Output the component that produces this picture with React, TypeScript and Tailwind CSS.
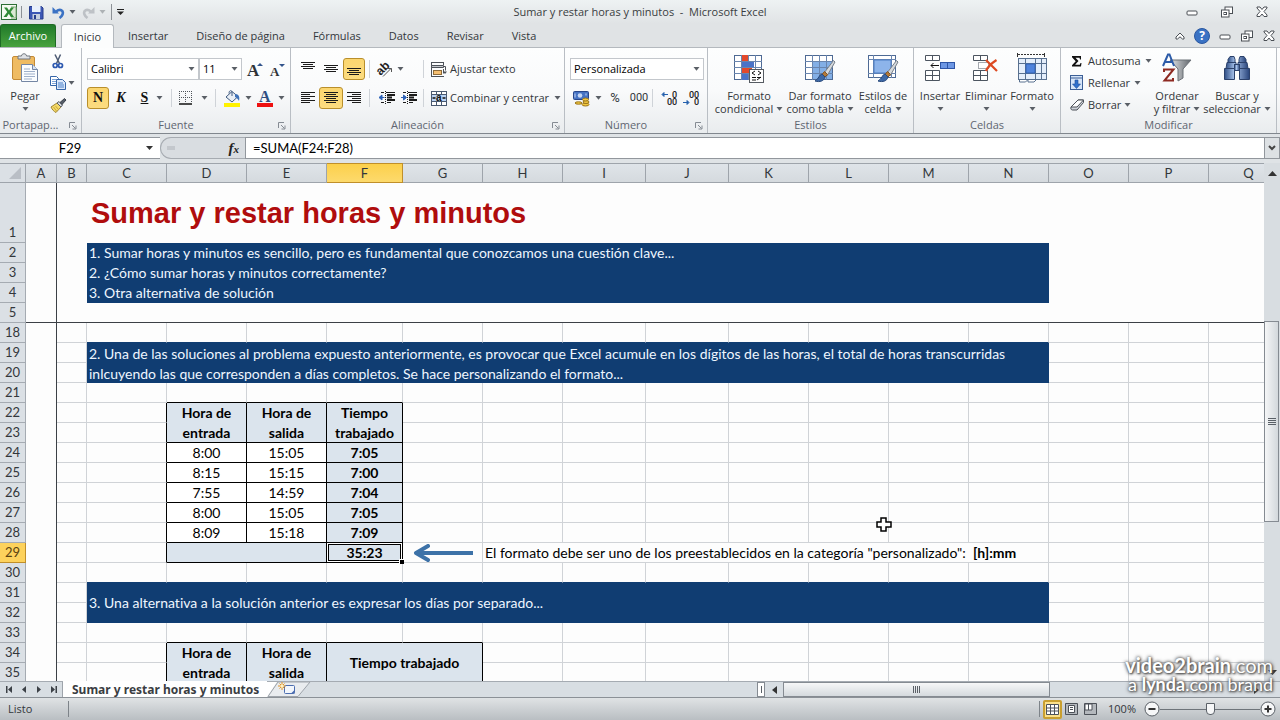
import type { ReactNode } from "react";

/* ---------- small shared pieces ---------- */

function Caret({ className = "" }: { className?: string }) {
  return (
    <svg width="7" height="4" viewBox="0 0 7 4" className={`shrink-0 ${className}`} aria-hidden="true">
      <path d="M0.5 0h6L3.5 3.8z" fill="#5a5f66" />
    </svg>
  );
}

function Divider() {
  return <span className="w-px h-[18px] bg-[#cfd3d8] shrink-0" />;
}

function IconButton({ label, active, width = "w-[22px]", children }: { label: string; active?: boolean; width?: string; children: ReactNode }) {
  return (
    <button
      type="button"
      aria-label={label}
      className={`${width} h-[22px] shrink-0 flex items-center justify-center gap-1 rounded-[3px] ${
        active ? "border border-[#b98f2b] bg-linear-to-b from-[#fbd66f] to-[#fcdc80]" : ""
      }`}
    >
      {children}
    </button>
  );
}

function Group({ title, launcher, width, children }: { title: string; launcher?: boolean; width: string; children: ReactNode }) {
  return (
    <section className={`${width} shrink-0 flex flex-col border-r border-[#b9bec4] relative`}>
      <div className="h-[69px] flex">{children}</div>
      <div className={`h-4 flex items-center justify-center text-[#5f6670] ${launcher ? "pr-5" : ""}`}>
        <h2>{title}</h2>
      </div>
      {launcher && (
        <button type="button" aria-label={`Opciones de ${title}`} className="absolute right-1 bottom-[3px]">
          <svg width="8" height="8" viewBox="0 0 8 8" fill="none" stroke="#858b93">
            <path d="M0.5 6V0.5H6M3 3l3.5 3.5M7 3.5V7H3.5" />
          </svg>
        </button>
      )}
    </section>
  );
}

function BigButton({ icon, lines, width }: { icon: ReactNode; lines: string[]; width: string }) {
  return (
    <button type="button" className={`${width} shrink-0 flex flex-col items-center pt-[5px] leading-[13px]`}>
      <span className="h-[30px] mb-[6px] flex items-center justify-center">{icon}</span>
      <span className="whitespace-nowrap">{lines[0]}</span>
      <span className="h-[13px] flex items-center gap-[3px] whitespace-nowrap">
        {lines[1]}
        <Caret />
      </span>
    </button>
  );
}

/* ---------- icons ---------- */

function ExcelLogo() {
  return (
    <svg width="17" height="17" viewBox="0 0 17 17">
      <rect x="0.5" y="0.5" width="15" height="15" fill="#f4faf1" stroke="#2c6e35" />
      <path d="M10 3h5v11h-5" fill="#dbe9d5" stroke="#7fa87a" />
      <path d="M3 3.5h3l2 3 2-3h3l-3.4 4.6L13 13H9.8L7.8 9.8 5.700 13H2.500l3.800-5z" fill="#2f8a36" />
    </svg>
  );
}

function SaveIcon() {
  return (
    <svg width="15" height="15" viewBox="0 0 15 15">
      <path d="M0.500 1.500h12l1.500 1.500v11H0.500z" fill="#3c57b5" stroke="#263c8a" />
      <rect x="3" y="1" width="8.500" height="6" fill="#e8f0fb" />
      <rect x="3.500" y="9" width="7.500" height="5" fill="#c8d0df" />
      <rect x="5" y="10" width="2" height="4" fill="#263c8a" />
    </svg>
  );
}

function UndoIcon({ redo }: { redo?: boolean }) {
  return (
    <svg width="13" height="13" viewBox="0 0 13 13" className={redo ? "-scale-x-100" : ""}>
      <path d="M4 5.500C8 2.500 12 4 10.500 8.500 10 10 9 11 7.500 12" fill="none" stroke={redo ? "#b4b8bd" : "#3b72c4"} strokeWidth="2.600" />
      <path d="M0.500 1v6.500h6.500z" fill={redo ? "#b4b8bd" : "#3b72c4"} />
    </svg>
  );
}

function MinimizeIcon() {
  return (
    <svg width="12" height="12" viewBox="0 0 12 12">
      <rect x="1" y="5" width="10" height="4" rx="1" fill="#fff" stroke="#4a4f55" />
    </svg>
  );
}

function RestoreIcon() {
  return (
    <svg width="12" height="12" viewBox="0 0 12 12" fill="#fff" stroke="#4a4f55">
      <rect x="4" y="1" width="7.500" height="6.500" />
      <rect x="0.500" y="4" width="7.500" height="7" />
      <rect x="3" y="6.500" width="2.500" height="2" />
    </svg>
  );
}

function CloseIcon() {
  return (
    <svg width="12" height="12" viewBox="0 0 12 12">
      <path d="M1 1h3l2 2.500L8 1h3v1L8 5.500 11 9v1.500H8L6 8l-2 2.500H1V9l3-3.500L1 2z" fill="#fff" stroke="#4a4f55" />
    </svg>
  );
}

function PasteIcon() {
  return (
    <svg width="28" height="30" viewBox="0 0 28 30">
      <rect x="1.500" y="3.500" width="22" height="23" rx="1.500" fill="#efbb62" stroke="#c48a35" />
      <path d="M7 6V3h3.500c0-3 5-3 5 0H19v3z" fill="#dfe2e6" stroke="#70767d" />
      <path d="M10.500 11.500h11l5 5v12h-16z" fill="#fbfdff" stroke="#7486a4" />
      <path d="M21.500 11.500v5h5" fill="#d6e2f2" stroke="#7486a4" />
      <path d="M13 16h6M13 18.500h11M13 21h11M13 23.500h11M13 26h8" stroke="#9fb0cb" />
    </svg>
  );
}

function CutIcon() {
  return (
    <svg width="12" height="15" viewBox="0 0 12 15" fill="none">
      <path d="M3 0.500l4.500 9M8.500 0.500L4.500 9.500" stroke="#4d5b73" strokeWidth="1.500" />
      <circle cx="3.200" cy="11.500" r="2" stroke="#2d59b0" strokeWidth="1.700" />
      <circle cx="8.500" cy="11.500" r="2" stroke="#2d59b0" strokeWidth="1.700" />
    </svg>
  );
}

function CopyIcon() {
  return (
    <svg width="16" height="14" viewBox="0 0 16 14" fill="#fff" stroke="#3565a8">
      <path d="M0.500 0.500h6l2 2v7h-8z" />
      <path d="M2 3.500h4M2 5.500h4M2 7.500h4" stroke="#7ea4d8" />
      <path d="M6.500 3.500h6l3 3v7h-9z" fill="#dbe8fa" />
      <path d="M8 7h5M8 9h6M8 11h6" stroke="#4b80c9" />
    </svg>
  );
}

function BrushIcon() {
  return (
    <svg width="17" height="15" viewBox="0 0 17 15">
      <path d="M1 9l6-4 4 4-5 5.500C4 13.500 2 11.500 1 9z" fill="#f3d968" stroke="#a18532" />
      <path d="M7 5l2-1.500L12.500 7 11 9z" fill="#d9dce0" stroke="#5a6068" />
      <path d="M10 4.500L14.500 0.500l1.500 1.500-4 4.500z" fill="#555d69" stroke="#3a4049" />
      <path d="M3.500 9l3 4M5.500 8l3 3.500" stroke="#c9a83c" />
    </svg>
  );
}

function GrowFont({ small }: { small?: boolean }) {
  return (
    <svg width="16" height="17" viewBox="0 0 16 17" className="overflow-visible">
      <text x="1" y="15" fontFamily="Liberation Serif, serif" fontWeight="700" fontSize={small ? 13 : 17} fill="#2f3338">
        A
      </text>
      <path d={small ? "M10 3h6l-3 3z" : "M11 5h6L14 2z"} fill="#32548c" />
    </svg>
  );
}

function BordersIcon() {
  return (
    <svg width="14" height="14" viewBox="0 0 14 14" fill="none" stroke="#4f545a">
      <path d="M0.500 0v12M6.500 0v12M12.500 0v12M0 0.500h13M0 6.500h13" strokeDasharray="1 1" />
      <path d="M0 13h13" stroke="#111" strokeWidth="1.500" />
    </svg>
  );
}

function FillIcon() {
  return (
    <svg width="17" height="17" viewBox="0 0 17 17">
      <path d="M2 7l6-5.500 6 5-6 5.500z" fill="#e9eff6" stroke="#405a80" />
      <path d="M8 6V1.500c-2-2-3 0-3 2" fill="none" stroke="#405a80" />
      <path d="M11 4c4 0 5 3 4 7-1-2-2-3-4-4z" fill="#3e71b8" />
      <rect y="13" width="16" height="4" fill="#fff200" />
    </svg>
  );
}

function FontColorIcon() {
  return (
    <svg width="17" height="17" viewBox="0 0 17 17" className="overflow-visible">
      <text x="2" y="12" fontFamily="Liberation Serif, serif" fontWeight="700" fontSize="16" fill="#2f4f82">
        A
      </text>
      <rect y="13" width="16" height="4" fill="#ee1111" />
    </svg>
  );
}

function LinesIcon({ rows, y }: { rows: [number, number][]; y: number }) {
  return (
    <svg width="14" height="14" viewBox="0 0 14 14" stroke="#1b1b1b">
      {rows.map(([a, b], i) => (
        <path key={i} d={`M${a} ${y + i * 2 + 0.5}H${b}`} />
      ))}
    </svg>
  );
}

const shortLines: [number, number][] = [[0, 14], [2, 12], [0, 14], [2, 12]];
const leftLines: [number, number][] = [[0, 14], [0, 9], [0, 14], [0, 9], [0, 14], [0, 9]];
const centerLines: [number, number][] = [[0, 14], [2, 12], [0, 14], [2, 12], [0, 14], [2, 12]];
const rightLines: [number, number][] = [[0, 14], [5, 14], [0, 14], [5, 14], [0, 14], [5, 14]];

function IndentIcon({ more }: { more?: boolean }) {
  return (
    <svg width="16" height="14" viewBox="0 0 16 14" stroke="#1b1b1b">
      <path d="M2 1.500h3M7 1.500h9M8 11.500h4M2 11.500h3" />
      <path d="M8 4h8M8 6.500h5M8 9h8" strokeWidth="2" />
      <path d="M6.500 0v14" strokeDasharray="1 1" />
      <path d={more ? "M0 6.500h3M2.500 4v5l3-2.500z" : "M2.500 6.500h3M3 4v5L0 6.500z"} fill="#2d62b8" stroke="#2d62b8" />
    </svg>
  );
}

function OrientationIcon() {
  return (
    <svg width="16" height="16" viewBox="0 0 16 16" className="shrink-0 overflow-visible">
      <text x="-1" y="12" transform="rotate(-45 5 8)" fontFamily="Liberation Sans, sans-serif" fontWeight="700" fontSize="12" fill="#222">
        ab
      </text>
      <path d="M6 15.500l8-8M10.500 7.500h4V11" stroke="#555" fill="none" />
    </svg>
  );
}

function WrapIcon() {
  return (
    <svg width="16" height="15" viewBox="0 0 16 15" fill="none" stroke="#4c5158">
      <path d="M0.500 0v15M12.500 0v3M0 0.500h13M0 14.500h13" />
      <path d="M0.500 3.500h12v2h-12z" fill="#c2c6cb" />
      <rect x="2.500" y="8.500" width="8" height="4" fill="#f6bf71" stroke="#8e6b38" />
      <path d="M12.500 4.500h2v4M12.500 11.500V7" />
      <path d="M12 9.500h4L14 12z" fill="#4c5158" stroke="none" />
    </svg>
  );
}

function MergeIcon() {
  return (
    <svg width="16" height="15" viewBox="0 0 16 15" stroke="#495970" fill="#fff">
      <rect x="0.500" y="0.500" width="15" height="14" />
      <path d="M5.500 0v3M10.500 0v3M5.500 11v3M10.500 11v3" />
      <rect x="0.500" y="3.500" width="15" height="7" fill="#b8d1f3" />
      <path d="M1.500 7h3M11.500 7h3" stroke="#111" strokeWidth="1.500" />
      <text x="5" y="10" fontSize="10" fontWeight="700" fontFamily="Liberation Sans, sans-serif" fill="#111" stroke="none">a</text>
    </svg>
  );
}

function CurrencyIcon() {
  return (
    <svg width="18" height="17" viewBox="0 0 18 17">
      <rect x="0.500" y="1.500" width="15" height="8" rx="1" fill="#4673c3" stroke="#27468a" />
      <circle cx="7" cy="5.500" r="2.300" fill="#c6d8f4" />
      <path d="M2 3.500v4M13 3.500v2" stroke="#c6d8f4" />
      <g fill="#f2c83f" stroke="#9a741c">
        <ellipse cx="12.500" cy="14.500" rx="3.500" ry="1.500" />
        <ellipse cx="13" cy="12" rx="3" ry="1.500" />
        <ellipse cx="12.500" cy="9.500" rx="3" ry="1.500" />
        <ellipse cx="5.500" cy="13" rx="3.500" ry="1.200" />
      </g>
    </svg>
  );
}

function DecimalIcon({ less }: { less?: boolean }) {
  return (
    <svg width="16" height="15" viewBox="0 0 16 15" className="overflow-visible">
      <g fontFamily="Roboto, sans-serif" fontWeight="500" fontSize="9" fill="#222">
        <text x={less ? 6 : 11} y="7">{less ? "00" : "0"}</text>
        <text x={less ? 11 : 6} y="14">{less ? "0" : "00"}</text>
      </g>
      <path d={less ? "M0 11.500h4M4 9.500l2 2-2 2z" : "M3 3.500h4M3 1.500L1 3.500l2 2z"} stroke="#2460ad" fill="#2460ad" />
    </svg>
  );
}

function GridBase({ fill }: { fill?: string }) {
  return (
    <>
      <rect x="0.500" y="2.500" width="27" height="24" fill="#fff" stroke="#4e6a94" />
      {fill && <rect x="7" y="8" width="20" height="18" fill={fill} />}
      <path d="M7.500 2v25M14.500 2v25M21.500 2v25M0 8.500h28M0 14.500h28M0 20.500h28" stroke="#6985ae" />
    </>
  );
}

function BrushOverlay() {
  return (
    <>
      <path d="M28.500 7.500L19 20l3 3 8-14z" fill="#d5d9dd" stroke="#777f88" />
      <path d="M19.500 18.500l-2.500 3 3 2.500 2.500-2.500z" fill="#b37a3a" stroke="#805222" />
      <path d="M17 21c-3 .5-3 5-7 7 5 1.500 9 0 10-4z" fill="#3d68a6" stroke="#294a7c" />
    </>
  );
}

function ConditionalIcon() {
  return (
    <svg width="31" height="30" viewBox="0 0 31 30">
      <GridBase />
      <rect x="8" y="2" width="6" height="6" fill="#e2492b" />
      <rect x="8" y="9" width="12" height="5" fill="#4a73c8" />
      <rect x="8" y="15" width="10" height="5" fill="#e2492b" />
      <rect x="8" y="21" width="6" height="6" fill="#4a73c8" />
      <rect x="15.500" y="16.500" width="14" height="13" fill="#fff" stroke="#555b62" />
      <path d="M21 18l-3 2 3 2M18 24.500h4M18 27h4M24 18l3 2-3 2M23 24.500h4M23 27l4-3" stroke="#111" fill="none" />
    </svg>
  );
}

function TableFormatIcon() {
  return (
    <svg width="31" height="30" viewBox="0 0 31 30">
      <GridBase fill="#83afe6" />
      <BrushOverlay />
    </svg>
  );
}

function CellStyleIcon() {
  return (
    <svg width="31" height="30" viewBox="0 0 31 30">
      <rect x="0.500" y="2.500" width="27" height="22" fill="#fff" stroke="#4e6a94" />
      <path d="M5.500 2v23M23.500 2v23M0 6.500h28M0 20.500h28" stroke="#6985ae" />
      <rect x="6" y="7" width="17" height="13" fill="#8db4ea" stroke="#4c7cc2" />
      <BrushOverlay />
    </svg>
  );
}

function InsertIcon() {
  return (
    <svg width="31" height="28" viewBox="0 0 31 28" fill="#fff" stroke="#4c5560">
      <path d="M0.500 1.500h14v5h-14zM7.500 1.500v5M0.500 16.500h14v10h-14zM7.500 16.500v10M0.500 21.500h14" />
      <rect x="15.500" y="8.500" width="14" height="6" fill="#6d97e4" stroke="#2e55a6" />
      <path d="M22.500 8.500v6" stroke="#2e55a6" />
      <path d="M6 11.500h8M8.500 9L6 11.500 8.500 14" stroke="#111" fill="none" />
    </svg>
  );
}

function DeleteIcon() {
  return (
    <svg width="26" height="28" viewBox="0 0 26 28" fill="#fff" stroke="#4c5560">
      <path d="M0.500 1.500h14v5h-14zM7.500 1.500v5M0.500 16.500h14v10h-14zM7.500 16.500v10M0.500 21.500h14" />
      <path d="M5.500 8.500h10v6h-10z" strokeDasharray="1 1" />
      <path d="M13 6l11 11M23.500 6C19 9 15 12 13 17" stroke="#dd4a22" strokeWidth="2.200" fill="none" />
    </svg>
  );
}

function FormatIcon() {
  return (
    <svg width="31" height="30" viewBox="0 0 31 30" fill="#fff" stroke="#58708f">
      <path d="M1 1.500h26" strokeDasharray="2 1" stroke="#333" />
      <path d="M0.500 0v4M27.500 0v4" stroke="#333" />
      <rect x="1.500" y="5.500" width="28" height="21" fill="#e4eefb" />
      <path d="M1 10.500h28M1 20.500h28M8.500 5v22M18.500 5v22M24.500 5v22" />
      <rect x="9" y="11" width="9" height="9" fill="#4f83dc" stroke="#3263b4" />
      <path d="M2.500 27v2h6l2-2M11 27v2h6l2-2" />
    </svg>
  );
}

function SumIcon() {
  return (
    <svg width="14" height="14" viewBox="0 0 14 14" className="shrink-0">
      <path d="M2 2h9v3.500h-1L9.500 3.800H5.500L8.500 7l-3.400 3.800H9.800L10.500 9h1L11 12.500H2v-1.200L5.700 7.200 2 3.300z" fill="#111" />
    </svg>
  );
}

function FillDownIcon() {
  return (
    <svg width="14" height="16" viewBox="0 0 14 16" className="shrink-0">
      <rect x="0.500" y="0.500" width="12" height="14" fill="#d6e5f8" stroke="#3c5f96" />
      <path d="M0.500 3h12" stroke="#3c5f96" />
      <path d="M5 5h3v4h2.500L6.500 13.500 2.500 9H5z" fill="#2f70cc" stroke="#1f4f9a" strokeWidth="0.600" />
    </svg>
  );
}

function EraserIcon() {
  return (
    <svg width="15" height="12" viewBox="0 0 15 12" className="shrink-0" stroke="#4a4f57">
      <path d="M1 8L8 1h5.500v2.500L7 11H2.500C1 11 0.500 9.500 1 8z" fill="#cfd3da" />
      <path d="M1 8L8 1h5.500L7 8z" fill="#fff" />
    </svg>
  );
}

function SortIcon() {
  return (
    <svg width="30" height="30" viewBox="0 0 30 30" className="overflow-visible">
      <defs>
        <linearGradient id="funnel">
          <stop offset="0" stopColor="#e3e5e7" />
          <stop offset="1" stopColor="#62676d" />
        </linearGradient>
      </defs>
      <path d="M8 7h21l-8 9v9l-5 3V16z" fill="url(#funnel)" stroke="#6b7077" />
      <path d="M1 13L6 1.500h1.500L12 13M3.500 9h7" stroke="#2c5ba8" strokeWidth="2" fill="none" />
      <path d="M2 19v-2.500h9.500L2.500 27.500H11V25" stroke="#8e2a22" strokeWidth="2" fill="none" />
    </svg>
  );
}

function BinocularsIcon() {
  return (
    <svg width="28" height="28" viewBox="0 0 28 28">
      <defs>
        <linearGradient id="lens">
          <stop offset="0" stopColor="#2f4f86" />
          <stop offset=".4" stopColor="#a9c4ec" />
          <stop offset="1" stopColor="#27437a" />
        </linearGradient>
      </defs>
      <g fill="url(#lens)" stroke="#2b416b">
        <path d="M7 2.500h4l1 3v3H5v-3zM17 2.500h4l2 3v3h-7v-3z" />
        <path d="M4 8.500h9v6H3zM15 8.500h9l1 6H15z" />
        <rect x="11.500" y="10.500" width="5" height="6" />
        <path d="M1.500 14.500h10v11h-10zM16.500 14.500h10v11h-10z" />
      </g>
    </svg>
  );
}

/* ---------- window chrome ---------- */

const menuTabs = ["Insertar", "Diseño de página", "Fórmulas", "Datos", "Revisar", "Vista"];

function TitleBar() {
  return (
    <header className="h-6 shrink-0 grid grid-cols-[1fr_auto_1fr] items-center bg-linear-to-b from-[#eef2f3] to-[#e0e3e5]">
      <div className="flex items-center pl-px">
        <ExcelLogo />
        <span className="w-px h-3 bg-[#8c9196] ml-[3px] mr-[7px]" />
        <button type="button" aria-label="Guardar"><SaveIcon /></button>
        <button type="button" aria-label="Deshacer" className="ml-2 flex items-center gap-1"><UndoIcon /><Caret /></button>
        <button type="button" aria-label="Rehacer" className="ml-[6px] flex items-center gap-1 opacity-80"><UndoIcon redo /><Caret className="opacity-50" /></button>
        <span className="w-px h-4 bg-[#8c9196] mx-[5px]" />
        <button type="button" aria-label="Personalizar barra">
          <svg width="7" height="6" viewBox="0 0 7 6"><path d="M0 0.500h7" stroke="#222" /><path d="M0 2.500h7L3.500 6z" fill="#222" /></svg>
        </button>
      </div>
      <h1 className="text-[#3a3d41] whitespace-pre">{"Sumar y restar horas y minutos  -  Microsoft Excel"}</h1>
      <div className="flex items-center justify-end gap-[23px] pr-3">
        <button type="button" aria-label="Minimizar"><MinimizeIcon /></button>
        <button type="button" aria-label="Restaurar"><RestoreIcon /></button>
        <button type="button" aria-label="Cerrar"><CloseIcon /></button>
      </div>
    </header>
  );
}

function MenuBar() {
  return (
    <nav className="h-6 shrink-0 flex items-end bg-[#e0e3e5] border-b border-[#b4b9be] text-[#33373b]">
      <button type="button" className="w-14 h-[23px] rounded-t-[3px] border border-b-0 border-[#1e6a24] bg-linear-to-b from-[#1f7a2a] to-[#48a23e] text-white">Archivo</button>
      <button type="button" className="w-[53px] h-6 ml-[5px] -mb-px rounded-t-[3px] border border-b-0 border-[#b4b9be] bg-[#fcfdfd]">Inicio</button>
      {menuTabs.map((t) => (
        <button key={t} type="button" className="h-[23px] px-[14px]">{t}</button>
      ))}
      <div className="ml-auto h-[23px] flex items-center gap-[10px] pr-[5px]">
        <button type="button" aria-label="Minimizar la cinta">
          <svg width="10" height="8" viewBox="0 0 10 8"><path d="M1 5l4-4 4 4v2H7.500L5 4.800 2.500 7H1z" fill="#fff" stroke="#4a4f55" /></svg>
        </button>
        <button type="button" aria-label="Ayuda" className="size-4 -mx-px rounded-full bg-[#3a72c4] border border-[#2a57a0] text-white font-bold leading-[14px] text-[12px]">?</button>
        <button type="button" aria-label="Minimizar libro"><MinimizeIcon /></button>
        <button type="button" aria-label="Restaurar libro"><RestoreIcon /></button>
        <button type="button" aria-label="Cerrar libro"><CloseIcon /></button>
      </div>
    </nav>
  );
}

function Combo({ label, value, width }: { label: string; value: string; width: string }) {
  return (
    <label className={`${width} h-[22px] shrink-0 relative block`}>
      <select aria-label={label} defaultValue={value} className="w-full h-full appearance-none border border-[#c3c7cc] bg-white pl-[3px] text-black outline-none">
        <option>{value}</option>
      </select>
      <Caret className="absolute right-[4px] top-[9px]" />
    </label>
  );
}

function Ribbon() {
  return (
    <div className="h-[86px] shrink-0 flex overflow-hidden bg-linear-to-b from-[#fdfefe] via-[#f9fafb] to-[#e9ecee] border-b border-[#81878e] text-[#33373b]">
      <Group title="Portapap..." launcher width="w-[82px]">
        <BigButton width="w-[50px]" icon={<PasteIcon />} lines={["Pegar", ""]} />
        <div className="flex flex-col gap-2 pt-[6px]">
          <button type="button" aria-label="Cortar" className="h-[14px] pl-[2px] flex items-center"><CutIcon /></button>
          <button type="button" aria-label="Copiar" className="h-[14px] flex items-center gap-[2px]"><CopyIcon /><Caret /></button>
          <button type="button" aria-label="Copiar formato" className="h-[14px] flex items-center"><BrushIcon /></button>
        </div>
      </Group>

      <Group title="Fuente" launcher width="w-[209px]">
        <div className="flex flex-col gap-[7px] pt-[10px] pl-[5px]">
          <div className="flex items-center">
            <Combo label="Fuente" value="Calibri" width="w-[112px]" />
            <Combo label="Tamaño" value="11" width="w-[43px]" />
            <IconButton label="Aumentar fuente" width="w-6"><GrowFont /></IconButton>
            <IconButton label="Disminuir fuente"><GrowFont small /></IconButton>
          </div>
          <div className="flex items-center font-['Liberation_Serif',serif] text-[14px] text-[#111]">
            <IconButton label="Negrita" active><b>N</b></IconButton>
            <IconButton label="Cursiva" width="w-6"><b className="italic">K</b></IconButton>
            <IconButton label="Subrayado" width="w-[38px]"><b className="underline mr-1">S</b><Caret /></IconButton>
            <Divider />
            <IconButton label="Bordes" width="w-[43px]"><BordersIcon /><Caret className="ml-1" /></IconButton>
            <Divider />
            <IconButton label="Relleno" width="w-[43px]"><FillIcon /><Caret /></IconButton>
            <IconButton label="Color de fuente" width="w-6"><FontColorIcon /><Caret /></IconButton>
          </div>
        </div>
      </Group>

      <Group title="Alineación" launcher width="w-[274px]">
        <div className="flex flex-col gap-[7px] pt-[10px] pl-[6px]">
          <div className="flex items-center">
            <IconButton label="Alinear arriba"><LinesIcon rows={shortLines} y={0} /></IconButton>
            <IconButton label="Alinear al medio" width="w-6"><LinesIcon rows={shortLines} y={3} /></IconButton>
            <IconButton label="Alinear abajo" active><LinesIcon rows={shortLines} y={6} /></IconButton>
            <span className="w-1" />
            <Divider />
            <IconButton label="Orientación" width="w-[40px]"><OrientationIcon /><Caret /></IconButton>
            <span className="w-[13px]" />
            <Divider />
          </div>
          <div className="flex items-center">
            <IconButton label="Alinear a la izquierda"><LinesIcon rows={leftLines} y={1} /></IconButton>
            <IconButton label="Centrar" active width="w-6"><LinesIcon rows={centerLines} y={1} /></IconButton>
            <IconButton label="Alinear a la derecha"><LinesIcon rows={rightLines} y={1} /></IconButton>
            <span className="w-1" />
            <Divider />
            <span className="w-[6px]" />
            <IconButton label="Disminuir sangría"><IndentIcon /></IconButton>
            <IconButton label="Aumentar sangría"><IndentIcon more /></IconButton>
            <span className="w-[3px]" />
            <Divider />
          </div>
        </div>
        <div className="flex flex-col gap-[7px] pt-[10px] pl-[7px]">
          <button type="button" className="h-[22px] flex items-center gap-[3px] whitespace-nowrap"><WrapIcon />Ajustar texto</button>
          <button type="button" className="h-[22px] flex items-center gap-[3px] whitespace-nowrap"><MergeIcon />Combinar y centrar<Caret className="ml-[2px]" /></button>
        </div>
      </Group>

      <Group title="Número" launcher width="w-[143px]">
        <div className="flex flex-col gap-[7px] pt-[10px] pl-[5px]">
          <Combo label="Formato de número" value="Personalizada" width="w-[134px]" />
          <div className="flex items-center text-[12px]">
            <IconButton label="Contabilidad" width="w-[34px]"><CurrencyIcon /><Caret /></IconButton>
            <IconButton label="Porcentaje"><span className="font-['Roboto',sans-serif] text-[13px]">%</span></IconButton>
            <IconButton label="Millares" width="w-[26px]"><span className="font-['Roboto',sans-serif] text-[11px]">000</span></IconButton>
            <Divider />
            <span className="w-[5px]" />
            <IconButton label="Aumentar decimales"><DecimalIcon /></IconButton>
            <IconButton label="Disminuir decimales"><DecimalIcon less /></IconButton>
          </div>
        </div>
      </Group>

      <Group title="Estilos" width="w-[206px]">
        <span className="w-1" />
        <BigButton width="w-[74px]" icon={<ConditionalIcon />} lines={["Formato", "condicional"]} />
        <BigButton width="w-[68px]" icon={<TableFormatIcon />} lines={["Dar formato", "como tabla"]} />
        <BigButton width="w-[58px]" icon={<CellStyleIcon />} lines={["Estilos de", "celda"]} />
      </Group>

      <Group title="Celdas" width="w-[147px]">
        <span className="w-[3px]" />
        <BigButton width="w-[46px]" icon={<InsertIcon />} lines={["Insertar", ""]} />
        <BigButton width="w-[46px]" icon={<DeleteIcon />} lines={["Eliminar", ""]} />
        <BigButton width="w-[46px]" icon={<FormatIcon />} lines={["Formato", ""]} />
      </Group>

      <Group title="Modificar" width="w-[216px]">
        <div className="w-[92px] shrink-0 flex flex-col gap-[6px] pt-[5px] pl-[9px]">
          <button type="button" className="h-4 flex items-center gap-1 whitespace-nowrap"><SumIcon />Autosuma<Caret /></button>
          <button type="button" className="h-4 flex items-center gap-1 whitespace-nowrap"><FillDownIcon />Rellenar<Caret /></button>
          <button type="button" className="h-4 flex items-center gap-[3px] whitespace-nowrap"><EraserIcon />Borrar<Caret /></button>
        </div>
        <BigButton width="w-12" icon={<SortIcon />} lines={["Ordenar", "y filtrar"]} />
        <BigButton width="w-[72px]" icon={<BinocularsIcon />} lines={["Buscar y", "seleccionar"]} />
      </Group>
    </div>
  );
}

function FormulaBar() {
  return (
    <div className="h-[29px] shrink-0 flex items-start pt-[3px] bg-[#dfe3e6] text-[13px] text-black font-['Lato',sans-serif]">
      <div className="w-40 h-[22px] shrink-0 flex items-center bg-white border-y border-[#92979d]">
        <input aria-label="Cuadro de nombres" defaultValue="F29" className="w-[140px] text-center outline-none bg-transparent" />
        <svg width="7" height="4" viewBox="0 0 7 4" className="ml-[6px]"><path d="M0 0h7L3.500 4z" fill="#333" /></svg>
      </div>
      <div className="w-[85px] h-[22px] shrink-0 flex items-center justify-between rounded-l-full border border-r-0 border-[#a6abb1] bg-[#d9dde1] px-[6px]">
        <span className="w-2 h-1 bg-[#c3c7cc]" />
        <button type="button" aria-label="Insertar función" className="font-['Liberation_Serif',serif] italic font-bold text-[15px] leading-none text-[#222]">
          f<span className="text-[11px]">x</span>
        </button>
      </div>
      <input aria-label="Barra de fórmulas" defaultValue="=SUMA(F24:F28)" className="flex-1 min-w-0 h-[22px] border border-r-0 border-[#92979d] bg-white pl-[7px] outline-none" />
      <button type="button" aria-label="Expandir" className="w-4 h-[22px] flex items-center justify-center border border-[#92979d] bg-[#dde1e4]">
        <svg width="8" height="6" viewBox="0 0 8 6"><path d="M1 1l3 3 3-3" fill="none" stroke="#444" strokeWidth="2" /></svg>
      </button>
    </div>
  );
}

/* ---------- worksheet ---------- */

const columns: [string, number][] = [
  ["A", 31], ["B", 30], ["C", 80], ["D", 80], ["E", 80], ["F", 76], ["G", 80], ["H", 80], ["I", 83],
  ["J", 83], ["K", 80], ["L", 80], ["M", 80], ["N", 80], ["O", 80], ["P", 80], ["Q", 80],
];
const letters = columns.map(([l]) => l);
const rowNumbers = [1, 2, 3, 4, 5, 18, 19, 20, 21, 22, 23, 24, 25, 26, 27, 28, 29, 30, 31, 32, 33, 34, 35, 36];
const tableWidth = 26 + columns.reduce((sum, [, w]) => sum + w, 0);

type Cell = { content: ReactNode; cols?: number; rows?: number; cls: string };

const banner = "bg-[#103d72] text-[#eef6ff] pl-[2px] text-left whitespace-nowrap";
const head = "bg-[#dbe4ed] border-r border-b border-black text-center font-bold";
const plain = "bg-white border-r border-b border-black text-center";
const total = "bg-[#dbe4ed] border-r border-b border-black text-center font-bold";

const twoLines = (a: string, b: string) => (
  <div className="h-[39px] leading-5">
    {a}
    <br />
    {b}
  </div>
);

const cells: Record<string, Cell> = {
  C1: {
    content: "Sumar y restar horas y minutos",
    cols: 12,
    cls: "pl-1 text-left align-middle whitespace-nowrap font-['Liberation_Sans',sans-serif] font-bold text-[29px] text-[#b00d0d]",
  },
  C2: { content: "1. Sumar horas y minutos es sencillo, pero es fundamental que conozcamos una cuestión clave...", cols: 12, cls: `${banner} pb-px` },
  C3: { content: "2. ¿Cómo sumar horas y minutos correctamente?", cols: 12, cls: `${banner} pb-px` },
  C4: { content: "3. Otra alternativa de solución", cols: 12, cls: `${banner} pb-px` },
  C19: {
    content: twoLines(
      "2. Una de las soluciones al problema expuesto anteriormente, es provocar que Excel acumule en los dígitos de las horas, el total de horas transcurridas",
      "inlcuyendo las que corresponden a días completos. Se hace personalizando el formato..."
    ),
    cols: 12,
    rows: 2,
    cls: banner,
  },
  D22: { content: twoLines("Hora de", "entrada"), rows: 2, cls: head },
  E22: { content: twoLines("Hora de", "salida"), rows: 2, cls: head },
  F22: { content: twoLines("Tiempo", "trabajado"), rows: 2, cls: head },
  D29: { content: "", cols: 2, cls: head },
  F29: {
    content: (
      <>
        35:23
        <span className="absolute inset-px border border-black shadow-[0_0_0_1px_#fff,0_0_0_2px_#000]" />
        <span className="absolute -right-[2px] -bottom-[2px] size-[5px] bg-black border-t border-l border-white" />
      </>
    ),
    cls: `${total} relative`,
  },
  G29: {
    content: (
      <svg width="60" height="18" viewBox="0 0 60 18" className="ml-[10px] block" fill="none" stroke="#3d72a8" strokeWidth="4" aria-hidden="true">
        <path d="M60 9H4M15 2L3 9l12 7" strokeLinejoin="round" strokeLinecap="round" />
      </svg>
    ),
    cls: "border-r border-b border-[#d0d3d7]",
  },
  H29: {
    content: (
      <>
        El formato debe ser uno de los preestablecidos en la categoría "personalizado":&nbsp; <b>[h]:mm</b>
      </>
    ),
    cols: 7,
    cls: "border-r border-b border-[#d0d3d7] pl-[2px] text-left whitespace-nowrap",
  },
  C31: { content: "3. Una alternativa a la solución anterior es expresar los días por separado...", cols: 12, rows: 2, cls: `${banner} pb-px` },
  D34: { content: twoLines("Hora de", "entrada"), rows: 2, cls: head },
  E34: { content: twoLines("Hora de", "salida"), rows: 2, cls: head },
  F34: { content: "Tiempo trabajado", cols: 2, rows: 2, cls: head },
};

const times = [
  ["8:00", "15:05", "7:05"],
  ["8:15", "15:15", "7:00"],
  ["7:55", "14:59", "7:04"],
  ["8:00", "15:05", "7:05"],
  ["8:09", "15:18", "7:09"],
];
times.forEach(([start, end, worked], i) => {
  cells[`D${24 + i}`] = { content: start, cls: plain };
  cells[`E${24 + i}`] = { content: end, cls: plain };
  cells[`F${24 + i}`] = { content: worked, cls: total };
});

// positions hidden under a merged cell
const covered = new Set<string>();
Object.entries(cells).forEach(([ref, { cols = 1, rows = 1 }]) => {
  const c = letters.indexOf(ref[0]);
  const r = Number(ref.slice(1));
  for (let y = 0; y < rows; y++) {
    for (let x = 0; x < cols; x++) {
      if (x || y) covered.add(`${letters[c + x]}${r + y}`);
    }
  }
});

function blankClass(col: string, row: number) {
  const bottomEdge = row === 5 ? "border-b border-b-[#3c4046]" : "";
  if (col === "A") return `border-r border-r-[#3c4046] ${bottomEdge}`;
  if (row <= 5) return bottomEdge;
  const right = col === "C" && ((row >= 22 && row <= 29) || row >= 34) ? "border-r-black" : "border-r-[#d0d3d7]";
  let bottom = "border-b-[#d0d3d7]";
  if ((row === 21 && "DEF".includes(col)) || (row === 33 && "DEFG".includes(col))) bottom = "border-b-black";
  if ((row === 18 || row === 30) && col >= "C" && col <= "N") bottom = "border-b-[#103d72]";
  return `border-r border-b ${right} ${bottom}`;
}

function Sheet() {
  return (
    <div className="flex-1 min-w-0 overflow-hidden bg-[#fdfdfd]">
      <table
        className="table-fixed border-separate border-spacing-0 text-[14px] leading-[19px] text-black font-['Lato',sans-serif] [font-variant-ligatures:none]"
        style={{ width: tableWidth }}
      >
        <colgroup>
          <col style={{ width: 26 }} />
          {columns.map(([l, w]) => (
            <col key={l} style={{ width: w }} />
          ))}
        </colgroup>
        <thead>
          <tr className="h-5 text-[13px] text-[#33373b]">
            <th className="p-0 border-r border-y border-[#9ea4ab] bg-[#dbe0e5]">
              <svg width="12" height="12" viewBox="0 0 12 12" className="ml-auto mr-1"><path d="M12 0v12H0z" fill="#b9bec5" /></svg>
            </th>
            {letters.map((l) => (
              <th
                key={l}
                scope="col"
                className={`p-0 font-normal leading-[18px] border-r border-y ${
                  l === "F" ? "bg-linear-to-b from-[#fcd04a] to-[#fdda6c] border-[#c08f2a]" : "bg-linear-to-b from-[#dfe4e9] to-[#d5dade] border-[#9ea4ab]"
                }`}
              >
                {l}
              </th>
            ))}
          </tr>
        </thead>
        <tbody>
          {rowNumbers.map((n) => (
            <tr key={n} className={n === 1 ? "h-[60px]" : "h-5"}>
              <th
                scope="row"
                className={`p-0 font-normal text-[13px] align-bottom text-center border-r border-b ${
                  n === 29 ? "bg-[#fdd25c] border-[#c08f2a] text-[#5a4310]" : "bg-[#dbe0e5] border-[#a5abb2] text-[#33373b]"
                }`}
              >
                {n}
              </th>
              {letters.map((l) => {
                const ref = `${l}${n}`;
                if (covered.has(ref)) return null;
                const cell = cells[ref];
                return (
                  <td key={ref} colSpan={cell?.cols} rowSpan={cell?.rows} className={`p-0 ${cell ? cell.cls : blankClass(l, n)}`}>
                    {cell?.content}
                  </td>
                );
              })}
            </tr>
          ))}
        </tbody>
      </table>
    </div>
  );
}

function VerticalScroll() {
  return (
    <div className="w-4 shrink-0 flex flex-col items-center bg-[#d8dde1]">
      <button type="button" aria-label="Subir" className="h-5 w-full flex items-center justify-center">
        <svg width="9" height="5" viewBox="0 0 9 5"><path d="M4.500 0L9 5H0z" fill="#333" /></svg>
      </button>
      <div className="flex-1 w-full flex flex-col">
        <div className="flex-[139]" />
        <div className="flex-[199] w-[15px] border border-[#858b92] bg-linear-to-r from-[#f5f6f7] to-[#d3d8dc] flex flex-col items-center justify-center gap-px">
          <i className="w-2 h-px bg-[#5a6067]" />
          <i className="w-2 h-px bg-[#5a6067]" />
          <i className="w-2 h-px bg-[#5a6067]" />
          <i className="w-2 h-px bg-[#5a6067]" />
        </div>
        <div className="flex-[143]" />
      </div>
      <button type="button" aria-label="Bajar" className="h-[17px] w-full flex items-center justify-center">
        <svg width="9" height="5" viewBox="0 0 9 5"><path d="M4.500 5L9 0H0z" fill="#333" /></svg>
      </button>
    </div>
  );
}

const navPaths: [string, string][] = [
  ["Primera hoja", "M1 0h1.500v7H1zM7 0v7L3 3.500z"],
  ["Hoja anterior", "M6 0v7L2 3.500z"],
  ["Hoja siguiente", "M2 0v7l4-3.500z"],
  ["Última hoja", "M1 0v7l4-3.500zM5.500 0H7v7H5.500z"],
];

function SheetTabs() {
  return (
    <div className="h-4 shrink-0 flex items-stretch bg-[#d8dee3] border-t border-[#a5abb2]">
      <div className="w-[63px] shrink-0 flex items-center gap-[7px] pl-[5px] border-r border-[#9ea4ab]">
        {navPaths.map(([label, d]) => (
          <button key={label} type="button" aria-label={label}>
            <svg width="8" height="7" viewBox="0 0 8 7"><path d={d} fill="#3c4147" /></svg>
          </button>
        ))}
      </div>
      <button type="button" className="shrink-0 pl-[9px] pr-2 -mt-px bg-white text-[12px] leading-[15px] font-bold font-['Noto_Sans',sans-serif] text-[#3a3d42] whitespace-nowrap">
        Sumar y restar horas y minutos
      </button>
      <button type="button" aria-label="Insertar hoja" className="shrink-0">
        <svg width="46" height="15" viewBox="0 0 46 15">
          <path d="M0 0h10L0 15z" fill="#fff" />
          <path d="M11 0L1 14.500h30L43 0z" fill="#e9ecef" stroke="#9ea4ab" />
          <rect x="17.500" y="3.500" width="10" height="8" rx="1" fill="#f2f6fc" stroke="#4b6db0" />
          <path d="M24 11.500h3.500V8z" fill="#4b6db0" />
          <path d="M15 0v8M11 4h8M12.500 1.500l5 5M17.500 1.500l-5 5" stroke="#e29422" />
          <circle cx="15" cy="4" r="1.500" fill="#fff3c4" />
        </svg>
      </button>
      <div className="flex-1" />
      <span className="w-2 shrink-0 border border-[#858b92] bg-white flex justify-center py-[3px]"><i className="w-px bg-[#5a6067]" /></span>
      <div className="w-[515px] shrink-0 flex">
        <button type="button" aria-label="Izquierda" className="w-[18px] flex items-center justify-center">
          <svg width="5" height="8" viewBox="0 0 5 8"><path d="M5 0v8L0 4z" fill="#333" /></svg>
        </button>
        <div className="w-[267px] border border-[#858b92] bg-linear-to-b from-[#f6f7f8] to-[#d5dade] flex items-center justify-center gap-px">
          <i className="w-px h-[7px] bg-[#5a6067]" />
          <i className="w-px h-[7px] bg-[#5a6067]" />
          <i className="w-px h-[7px] bg-[#5a6067]" />
          <i className="w-px h-[7px] bg-[#5a6067]" />
        </div>
        <div className="flex-1" />
        <button type="button" aria-label="Derecha" className="w-4 flex items-center justify-center mr-4">
          <svg width="5" height="8" viewBox="0 0 5 8"><path d="M0 0v8l5-4z" fill="#333" /></svg>
        </button>
      </div>
    </div>
  );
}

function StatusBar() {
  return (
    <footer className="h-[23px] shrink-0 flex items-center bg-linear-to-b from-[#e0e3e5] to-[#b9bec2] border-t border-[#8b9197] text-[#33373b]">
      <span className="w-[68px] pl-2">Listo</span>
      <span className="w-px h-4 bg-[#7d8389]" />
      <span className="flex-1" />
      <span className="w-px h-4 bg-[#7d8389] mr-[3px]" />
      <button type="button" aria-label="Normal" className="w-[19px] h-[19px] flex items-center justify-center border-2 border-[#c99f2f] rounded-[2px] bg-[#fbe08a]">
        <svg width="13" height="11" viewBox="0 0 13 11" fill="#fff" stroke="#4c5158"><path d="M0.500 0.500h12v10h-12zM4.500 0v11M8.500 0v11M0 4h13M0 7h13" /></svg>
      </button>
      <button type="button" aria-label="Diseño de página" className="w-[19px] flex justify-center">
        <svg width="13" height="12" viewBox="0 0 13 12" fill="#b4b8bd" stroke="#4c5158"><path d="M0.500 0.500h12v11h-12z" /><path d="M3.500 2.500h6v7h-6z" fill="#fff" /><path d="M5 4.500h3M5 6.500h3" /></svg>
      </button>
      <button type="button" aria-label="Salto de página" className="w-[19px] flex justify-center">
        <svg width="13" height="12" viewBox="0 0 13 12" fill="#b4b8bd" stroke="#4c5158"><path d="M0.500 0.500h12v11h-12z" /><path d="M1 1h7v6H1zM4.500 1v6" fill="#fff" /></svg>
      </button>
      <span className="w-10 text-right pr-1">100%</span>
      <button type="button" aria-label="Alejar" className="ml-1">
        <svg width="16" height="16" viewBox="0 0 16 16"><circle cx="8" cy="8" r="7" fill="#f6f7f8" stroke="#5a6067" /><path d="M4.500 8h7" stroke="#333" strokeWidth="2" /></svg>
      </button>
      <input
        type="range"
        aria-label="Zoom"
        min={0}
        max={200}
        defaultValue={100}
        className="w-[100px] h-[14px] appearance-none bg-transparent bg-linear-to-b from-[#6e747a] to-[#6e747a] bg-[length:100%_1px] bg-center bg-no-repeat [&::-webkit-slider-thumb]:appearance-none [&::-webkit-slider-thumb]:w-[9px] [&::-webkit-slider-thumb]:h-3 [&::-webkit-slider-thumb]:bg-[#f6f7f8] [&::-webkit-slider-thumb]:border [&::-webkit-slider-thumb]:border-[#5a6067] [&::-webkit-slider-thumb]:rounded-b-[4px]"
      />
      <button type="button" aria-label="Acercar" className="mr-1">
        <svg width="16" height="16" viewBox="0 0 16 16"><circle cx="8" cy="8" r="7" fill="#f6f7f8" stroke="#5a6067" /><path d="M4.500 8h7M8 4.500v7" stroke="#333" strokeWidth="2" /></svg>
      </button>
    </footer>
  );
}

export default function App() {
  return (
    <div className="h-screen flex flex-col relative overflow-hidden bg-[#dfe3e6] text-[11px] leading-[14px] font-['Open_Sans','Noto_Sans',sans-serif]">
      <TitleBar />
      <MenuBar />
      <Ribbon />
      <FormulaBar />
      <main className="flex-1 min-h-0 flex">
        <Sheet />
        <VerticalScroll />
      </main>
      <SheetTabs />
      <StatusBar />

      {/* cell pointer */}
      <svg width="16" height="16" viewBox="0 0 16 16" className="absolute left-[876px] top-[517px]" aria-hidden="true">
        <path d="M5 1h5v4h5v5h-5v4H5v-4H1V5h4z" fill="#fff" stroke="#000" strokeWidth="1.500" />
      </svg>

      <p className="absolute right-[7px] bottom-[27px] text-right text-white [text-shadow:0_0_3px_#555,0_0_4px_#666,1px_1px_2px_#555] font-['Lato',sans-serif]">
        <span className="block text-[20px] leading-5"><b>video2brain</b>.com</span>
        <span className="block text-[18px] leading-[18px]">a <b>lynda</b>.com brand</span>
      </p>
    </div>
  );
}
